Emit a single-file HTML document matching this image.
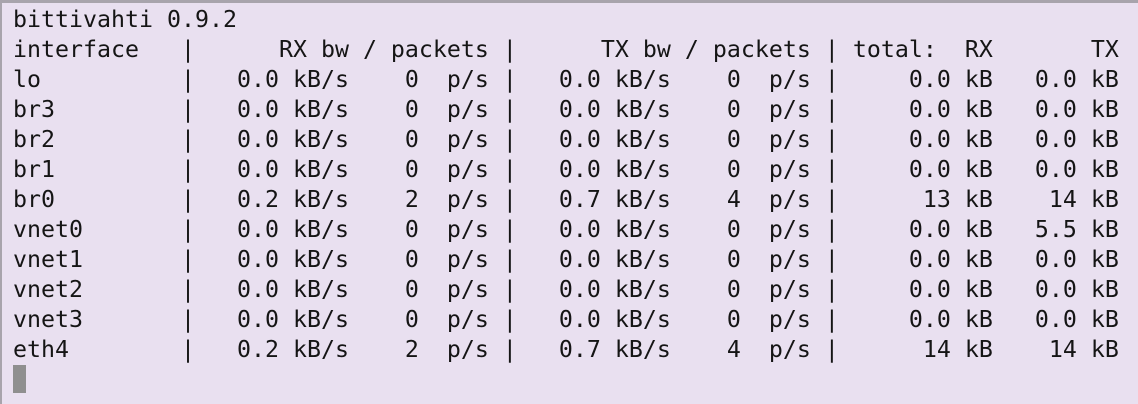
<!DOCTYPE html>
<html><head><meta charset="utf-8"><style>
html,body{margin:0;padding:0;}
body{width:1138px;height:404px;overflow:hidden;background:#e9e0f0;position:relative;}
.b{position:absolute;left:0;top:0;width:1138px;height:3px;background:#a8a4ac;}
.l{position:absolute;left:0;top:0;width:2px;height:404px;background:#a8a4ac;}
pre{position:absolute;left:13px;top:5px;margin:0;font-family:"DejaVu Sans Mono","Liberation Mono",monospace;font-size:23.25px;line-height:30px;color:#151515;}
.c{position:absolute;left:13px;top:365px;width:13px;height:28px;background:#8f8f8f;}
</style></head><body>
<div class="b"></div><div class="l"></div>
<pre>bittivahti 0.9.2
interface   |      RX bw / packets |      TX bw / packets | total:  RX       TX
lo          |   0.0 kB/s    0  p/s |   0.0 kB/s    0  p/s |     0.0 kB   0.0 kB
br3         |   0.0 kB/s    0  p/s |   0.0 kB/s    0  p/s |     0.0 kB   0.0 kB
br2         |   0.0 kB/s    0  p/s |   0.0 kB/s    0  p/s |     0.0 kB   0.0 kB
br1         |   0.0 kB/s    0  p/s |   0.0 kB/s    0  p/s |     0.0 kB   0.0 kB
br0         |   0.2 kB/s    2  p/s |   0.7 kB/s    4  p/s |      13 kB    14 kB
vnet0       |   0.0 kB/s    0  p/s |   0.0 kB/s    0  p/s |     0.0 kB   5.5 kB
vnet1       |   0.0 kB/s    0  p/s |   0.0 kB/s    0  p/s |     0.0 kB   0.0 kB
vnet2       |   0.0 kB/s    0  p/s |   0.0 kB/s    0  p/s |     0.0 kB   0.0 kB
vnet3       |   0.0 kB/s    0  p/s |   0.0 kB/s    0  p/s |     0.0 kB   0.0 kB
eth4        |   0.2 kB/s    2  p/s |   0.7 kB/s    4  p/s |      14 kB    14 kB</pre>
<div class="c"></div>
</body></html>
